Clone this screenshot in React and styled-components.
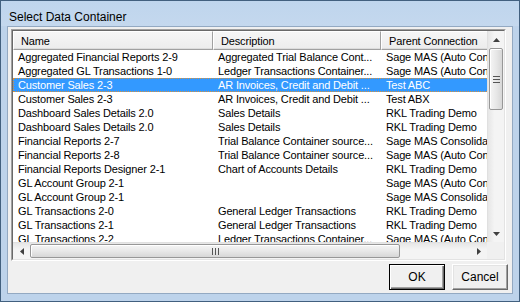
import styled, { createGlobalStyle } from "styled-components";

const GlobalStyle = createGlobalStyle`
  html, body {
    margin: 0;
    padding: 0;
    overflow: hidden;
    background: #ffffff;
  }
  * { box-sizing: border-box; }
`;

const rows = [
  ["Aggregated Financial Reports 2-9", "Aggregated Trial Balance Cont...", "Sage MAS (Auto Connection)"],
  ["Aggregated GL Transactions 1-0", "Ledger Transactions Container...", "Sage MAS (Auto Connection)"],
  ["Customer Sales 2-3", "AR Invoices, Credit and Debit ...", "Test ABC"],
  ["Customer Sales 2-3", "AR Invoices, Credit and Debit ...", "Test ABX"],
  ["Dashboard Sales Details 2.0", "Sales Details", "RKL Trading Demo"],
  ["Dashboard Sales Details 2.0", "Sales Details", "RKL Trading Demo"],
  ["Financial Reports 2-7", "Trial Balance Container source...", "Sage MAS Consolidated"],
  ["Financial Reports 2-8", "Trial Balance Container source...", "Sage MAS (Auto Connection)"],
  ["Financial Reports Designer 2-1", "Chart of Accounts Details", "RKL Trading Demo"],
  ["GL Account Group 2-1", "", "Sage MAS (Auto Connection)"],
  ["GL Account Group 2-1", "", "Sage MAS Consolidated"],
  ["GL Transactions 2-0", "General Ledger Transactions", "RKL Trading Demo"],
  ["GL Transactions 2-1", "General Ledger Transactions", "RKL Trading Demo"],
  ["GL Transactions 2-2", "Ledger Transactions Container...", "Sage MAS (Auto Connection)"],
];

const columns = [
  { title: "Name", width: 200 },
  { title: "Description", width: 168 },
  { title: "Parent Connection", width: 160 },
];

const Window = styled.div`
  width: 520px;
  height: 302px;
  border: 1px solid #42607f;
  background: #bdd3eb;
  display: flex;
  flex-direction: column;
  font-family: "Liberation Sans", Arial, sans-serif;
`;

const TitleBar = styled.div`
  height: 25px;
  flex: none;
  padding: 9px 0 0 8px;
  line-height: 14px;
  font-size: 12px;
  color: #000;
  background: linear-gradient(#bfd5ed, #c4d8ee);
`;

const Client = styled.div`
  flex: 1;
  margin: 0 6px 7px 6px;
  border: 1px solid #93a9c2;
  background: #f0f0f0;
  padding: 2px 4px 3px 3px;
  display: flex;
  flex-direction: column;
`;

const ListView = styled.div`
  height: 232px;
  margin-right: 2px;
  border: 1px solid;
  border-color: #a0a0a0 #ffffff #ffffff #a0a0a0;
  display: flex;
`;

const ListInner = styled.div`
  flex: 1;
  border: 1px solid;
  border-color: #696969 #e3e3e3 #e3e3e3 #696969;
  background: #fff;
  display: grid;
  grid-template-columns: 1fr 17px;
  grid-template-rows: 1fr 17px;
  overflow: hidden;
`;

const Viewport = styled.div`
  overflow: hidden;
  font-size: 11px;
  letter-spacing: -0.15px;
  color: #000;
`;

const Table = styled.div`
  width: 528px;
`;

const HeaderRow = styled.div`
  display: flex;
  height: 19px;
`;

const HeaderCell = styled.div`
  flex: none;
  width: ${(p) => p.$w}px;
  padding: 2px 0 0 7px;
  line-height: 14px;
  background: linear-gradient(#f6f6f6, #ececec);
  border-top: 1px solid #ffffff;
  border-left: 1px solid #ffffff;
  border-right: 1px solid #a0a0a0;
  border-bottom: 1px solid #a0a0a0;
  box-shadow: inset 0 -1px 0 #dcdcdc;
  white-space: nowrap;
  overflow: hidden;
`;

const Row = styled.div`
  display: flex;
  height: 14px;
  line-height: 14px;
  background: ${(p) => (p.$selected ? "#3399ff" : "transparent")};
  color: ${(p) => (p.$selected ? "#ffffff" : "#000000")};
  outline: ${(p) => (p.$selected ? "1px dotted #d9913a" : "none")};
  outline-offset: -1px;
`;

const Cell = styled.div`
  flex: none;
  width: ${(p) => p.$w}px;
  padding-left: 5px;
  white-space: nowrap;
  overflow: hidden;
`;

const VScroll = styled.div`
  display: flex;
  flex-direction: column;
  background: linear-gradient(90deg, #e6e6e6, #f4f4f4 40%, #f4f4f4);
  border-left: 1px solid #e0e0e0;
`;

const HScroll = styled.div`
  display: flex;
  align-items: stretch;
  background: linear-gradient(#e6e6e6, #f4f4f4 40%, #f4f4f4);
  border-top: 1px solid #e0e0e0;
`;

const ArrowBox = styled.div`
  flex: none;
  width: 17px;
  height: 17px;
  display: flex;
  align-items: center;
  justify-content: center;
`;

const Track = styled.div`
  flex: 1;
  display: flex;
  flex-direction: ${(p) => (p.$vertical ? "column" : "row")};
`;

const Thumb = styled.div`
  flex: none;
  ${(p) =>
    p.$vertical
      ? `height: ${p.$size}px; margin: 0 1px 0 1px;`
      : `width: ${p.$size}px; margin: 1px 0 1px 0;`}
  border: 1px solid #979797;
  border-radius: 2px;
  background: ${(p) =>
    p.$vertical
      ? "linear-gradient(90deg, #f5f5f5, #e8e8e8 50%, #d7d7d7)"
      : "linear-gradient(#f5f5f5, #e8e8e8 50%, #d7d7d7)"};
  box-shadow: inset 1px 1px 0 #ffffff;
  display: flex;
  align-items: center;
  justify-content: center;
`;

const Corner = styled.div`
  background: #f0f0f0;
`;

const ButtonRow = styled.div`
  display: flex;
  justify-content: flex-end;
  gap: 7px;
  margin-top: 3px;
`;

const Button = styled.button`
  width: 56px;
  height: 26px;
  padding: 0;
  font-family: "Liberation Sans", Arial, sans-serif;
  font-size: 12px;
  color: #000;
  background: #f0f0f0;
  border: 1px solid;
  border-color: ${(p) => (p.$default ? "#000" : "#fff #696969 #696969 #fff")};
  box-shadow: ${(p) =>
    p.$default
      ? "inset 1px 1px 0 #fff, inset -1px -1px 0 #696969, inset -2px -2px 0 #a0a0a0"
      : "inset -1px -1px 0 #a0a0a0, inset 1px 1px 0 #e3e3e3"};
`;

function Arrow({ dir }) {
  const pts = {
    up: "0,4 7,4 3.5,0",
    down: "0,0 7,0 3.5,4",
    left: "4,0 4,7 0,3.5",
    right: "0,0 0,7 4,3.5",
  }[dir];
  const vertical = dir === "up" || dir === "down";
  return (
    <svg width={vertical ? 7 : 4} height={vertical ? 4 : 7} viewBox={vertical ? "0 0 7 4" : "0 0 4 7"}>
      <polygon points={pts} fill="#404040" />
    </svg>
  );
}

function Grip({ vertical }) {
  return vertical ? (
    <svg width="7" height="7" viewBox="0 0 7 7">
      {[0, 3, 6].map((y) => (
        <rect key={y} x="0" y={y} width="7" height="1" fill="#555" />
      ))}
    </svg>
  ) : (
    <svg width="7" height="7" viewBox="0 0 7 7">
      {[0, 3, 6].map((x) => (
        <rect key={x} x={x} y="0" width="1" height="7" fill="#555" />
      ))}
    </svg>
  );
}

export default function App() {
  return (
    <>
      <GlobalStyle />
      <Window>
        <TitleBar>Select Data Container</TitleBar>
        <Client>
          <ListView>
            <ListInner>
              <Viewport>
                <Table>
                  <HeaderRow>
                    {columns.map((c) => (
                      <HeaderCell key={c.title} $w={c.width}>
                        {c.title}
                      </HeaderCell>
                    ))}
                  </HeaderRow>
                  {rows.map((r, i) => (
                    <Row key={i} $selected={i === 2}>
                      {r.map((v, j) => (
                        <Cell key={j} $w={columns[j].width}>
                          {v}
                        </Cell>
                      ))}
                    </Row>
                  ))}
                </Table>
              </Viewport>
              <VScroll>
                <ArrowBox>
                  <Arrow dir="up" />
                </ArrowBox>
                <Track $vertical>
                  <Thumb $vertical $size={62}>
                    <Grip vertical />
                  </Thumb>
                </Track>
                <ArrowBox>
                  <Arrow dir="down" />
                </ArrowBox>
              </VScroll>
              <HScroll>
                <ArrowBox>
                  <Arrow dir="left" />
                </ArrowBox>
                <Track>
                  <Thumb $size={370}>
                    <Grip />
                  </Thumb>
                </Track>
                <ArrowBox>
                  <Arrow dir="right" />
                </ArrowBox>
              </HScroll>
              <Corner />
            </ListInner>
          </ListView>
          <ButtonRow>
            <Button $default>OK</Button>
            <Button>Cancel</Button>
          </ButtonRow>
        </Client>
      </Window>
    </>
  );
}
